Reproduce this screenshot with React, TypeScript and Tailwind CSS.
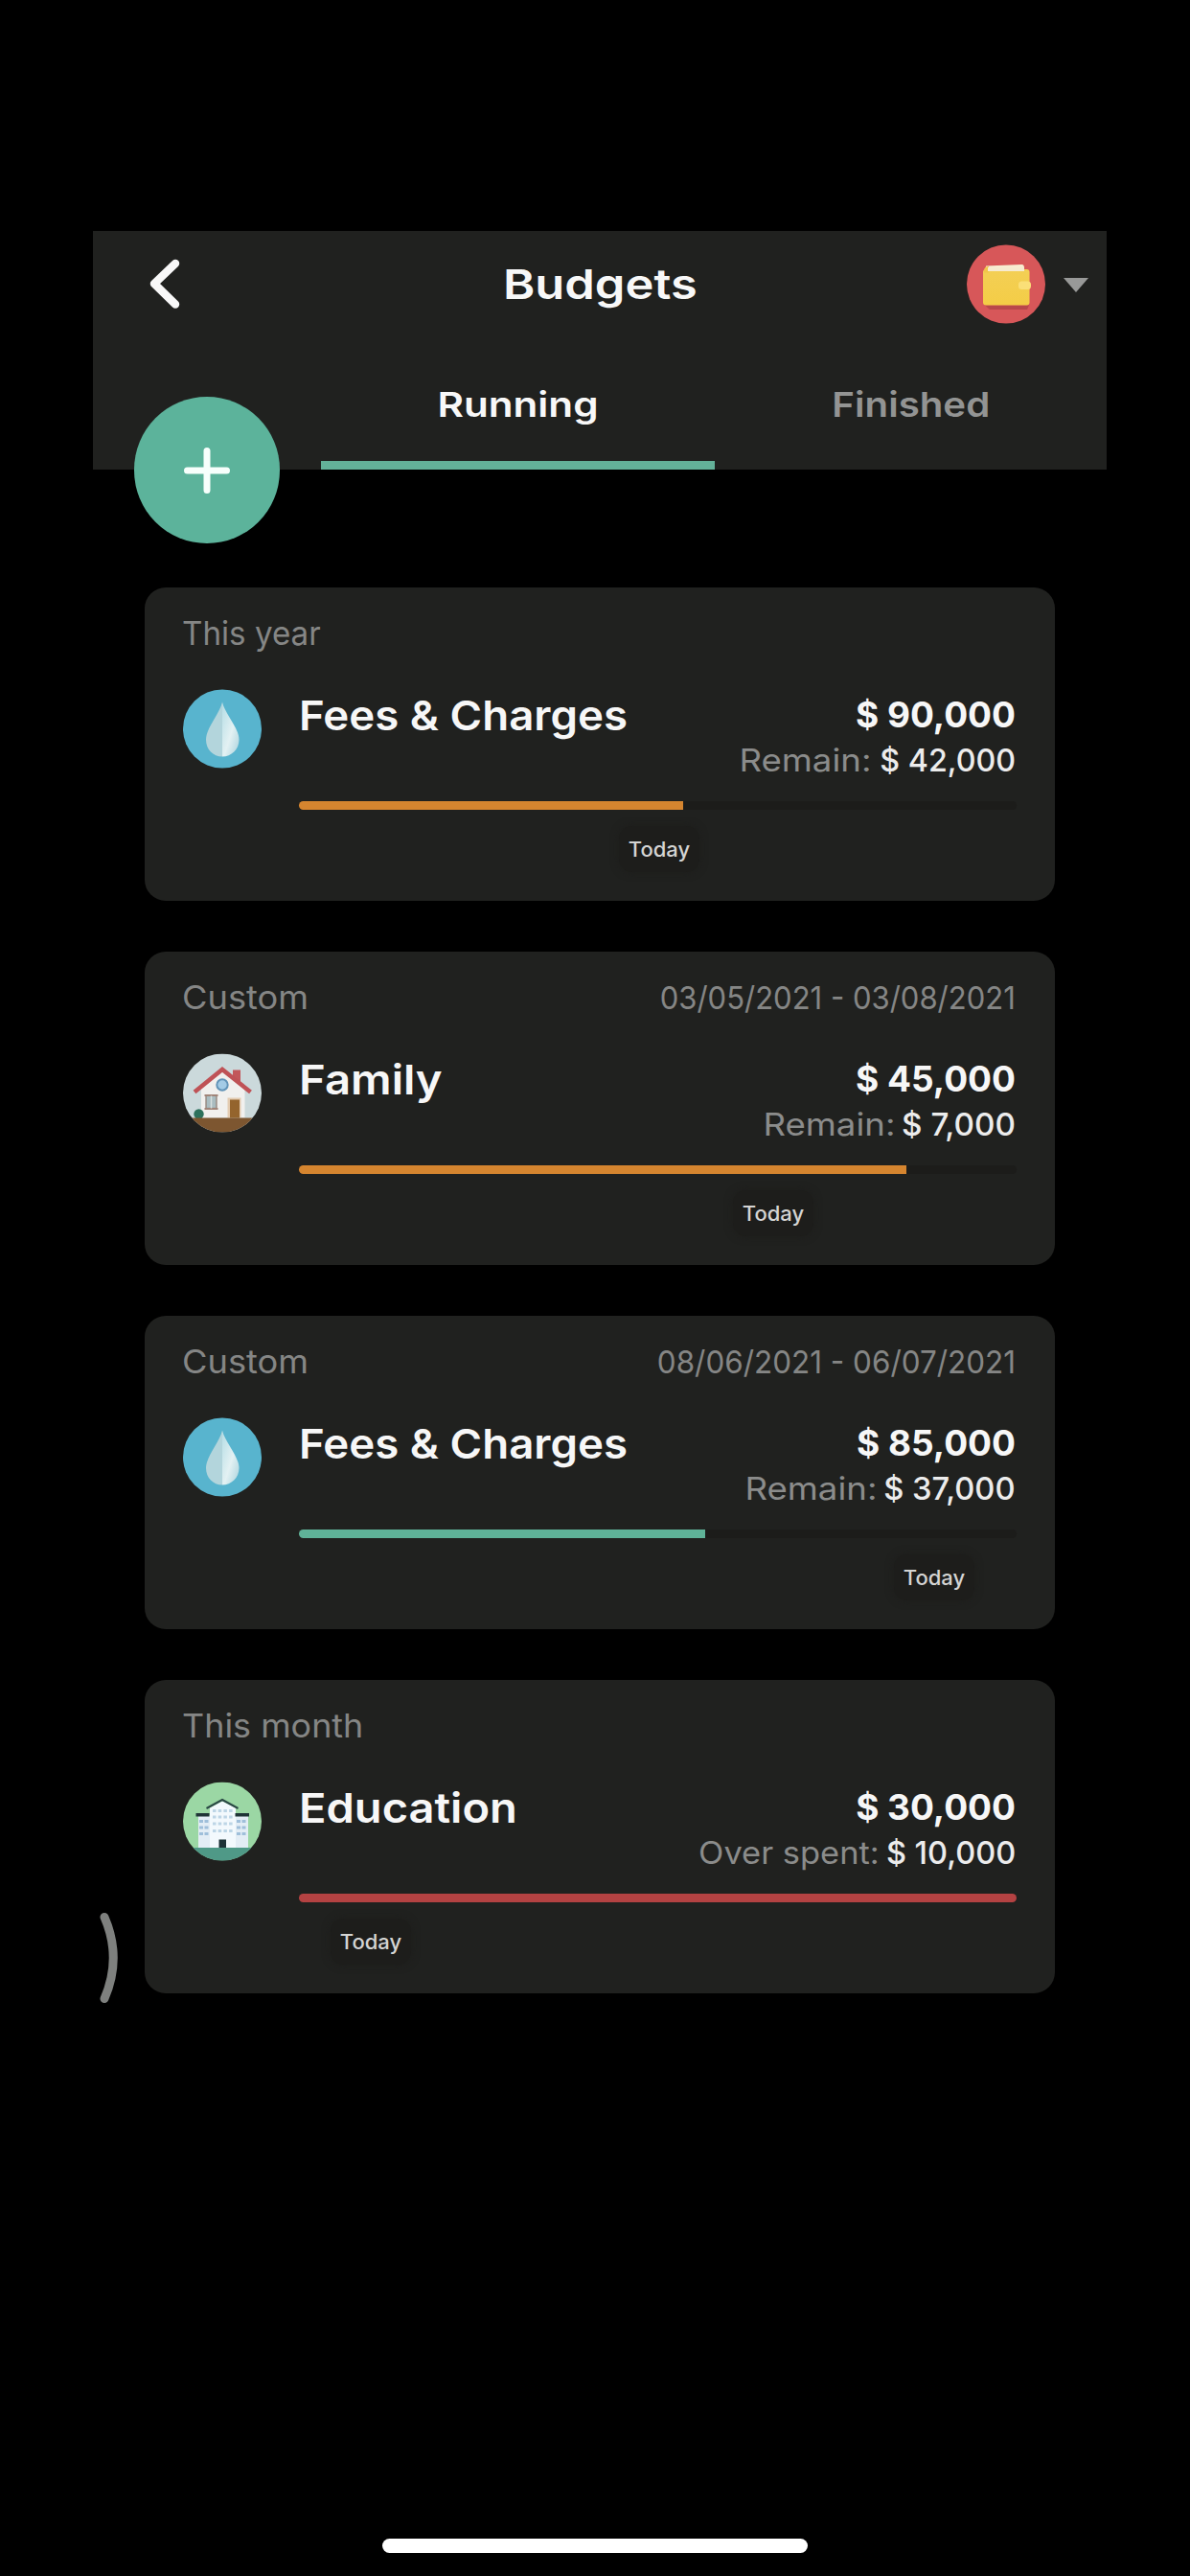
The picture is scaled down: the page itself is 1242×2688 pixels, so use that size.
import type { ReactNode } from "react";

type Budget = {
  period: string;
  periodClass: string;
  dates?: string;
  datesClass?: string;
  icon: ReactNode;
  name: string;
  nameClass: string;
  amount: string;
  label: string;
  labelClass: string;
  rest: string;
  restClass: string;
  fillClass: string;
  todayClass: string;
};

function DropIcon() {
  return (
    <svg viewBox="0 0 82 82" className="h-[83px] w-[82px] shrink-0">
      <defs>
        <linearGradient id="dropRight" x1="0" y1="0" x2="1" y2="1">
          <stop offset="0" stopColor="#b5dde5" />
          <stop offset="0.55" stopColor="#e3f1f3" />
          <stop offset="1" stopColor="#a9d2dc" />
        </linearGradient>
      </defs>
      <circle cx="41" cy="41" r="41" fill="#58b4ce" />
      <path d="M41 13C38 26 24 40 24 52.500C24 62.500 31.500 70 41 70Z" fill="#b3d5dc" />
      <path d="M41 13C44 26 58.500 40 58.500 52.500C58.500 62.500 50.500 70 41 70Z" fill="url(#dropRight)" />
    </svg>
  );
}

function HouseIcon() {
  return (
    <svg viewBox="0 0 82 82" className="h-[83px] w-[82px] shrink-0">
      <defs>
        <clipPath id="houseClip">
          <circle cx="41" cy="41" r="41" />
        </clipPath>
      </defs>
      <g clipPath="url(#houseClip)">
        <rect width="82" height="82" fill="#cbd9db" />
        <rect x="52" y="17" width="8" height="14" fill="#c2575a" />
        <path d="M19 36L41 17L64.500 36V67H19Z" fill="#f1f0ee" />
        <path d="M12 40L41 16.500L70.500 40" fill="none" stroke="#bf5256" strokeWidth="4.500" />
        <circle cx="41" cy="32.500" r="5.700" fill="#a3cbe6" stroke="#6193b8" strokeWidth="2" />
        <rect x="24" y="43.500" width="11" height="13.500" fill="#a9bcc0" stroke="#938279" strokeWidth="1.300" />
        <path d="M22.500 43.500H36.500M22.500 57.500H36.500" stroke="#a18478" strokeWidth="2" />
        <path d="M29.500 44V57" stroke="#d8dfde" strokeWidth="1.500" />
        <rect x="46.500" y="46" width="14" height="21" fill="#e4ccb2" />
        <rect x="49" y="48" width="10" height="19" fill="#94642d" />
        <circle cx="16.500" cy="63" r="5.200" fill="#2d715c" />
        <rect y="67" width="82" height="15" fill="#7d5630" />
      </g>
    </svg>
  );
}

function SchoolIcon() {
  return (
    <svg viewBox="0 0 82 82" className="h-[83px] w-[82px] shrink-0">
      <defs>
        <clipPath id="schoolClip">
          <circle cx="41" cy="41" r="41" />
        </clipPath>
      </defs>
      <g clipPath="url(#schoolClip)">
        <rect width="82" height="82" fill="#9bd7a4" />
        <rect x="16" y="35" width="52" height="34" fill="#e3edf5" />
        <path d="M28 27L41 20L55 27V69H28Z" fill="#f3f9fd" />
        <path d="M24.500 27.500L41 18.500L57.500 27.500" fill="none" stroke="#2b4945" strokeWidth="2" />
        <path d="M13.500 34.200H27.500M54.500 34.200H69" stroke="#1f3436" strokeWidth="3.400" />
        <path d="M31 30H52M31 36.500H52M31 43.500H52M31 51H52" stroke="#bdd5e6" strokeWidth="3" strokeDasharray="3.500 2.200" />
        <path d="M17 41H27M17 47.500H27M17 54H27M56 41H66.500M56 47.500H66.500M56 54H66.500" stroke="#9fbfda" strokeWidth="3.200" strokeDasharray="4 1.500" />
        <rect x="37.500" y="60" width="7.500" height="9" fill="#1d3237" />
        <rect y="68.500" width="82" height="14" fill="#4f9987" />
      </g>
    </svg>
  );
}

function WalletIcon() {
  return (
    <svg viewBox="0 0 82 82" className="h-[83px] w-[82px]">
      <defs>
        <linearGradient id="wallet" x1="0" y1="0" x2="0" y2="1">
          <stop offset="0" stopColor="#f3cf55" />
          <stop offset="1" stopColor="#f4cd46" />
        </linearGradient>
      </defs>
      <circle cx="41" cy="41" r="41" fill="#d75759" />
      <path d="M19 63H65L63 67.500H24Z" fill="#b9484a" />
      <path d="M20 22L57 20.500Q60 20 60 24V32H19Z" fill="#f8ecd0" />
      <rect x="17" y="25.500" width="48.500" height="37.500" rx="3" fill="url(#wallet)" />
      <path d="M18 27Q18 22.500 23 22.500L23 29H18Z" fill="#f1c54a" />
      <path d="M22 25.500H60" stroke="#f6ead0" strokeWidth="4" />
      <rect x="54" y="38" width="13" height="8.500" rx="3.500" fill="#fadf78" />
    </svg>
  );
}

const budgets: Budget[] = [
  {
    period: "This year",
    periodClass: "scale-x-[0.976]",
    icon: <DropIcon />,
    name: "Fees & Charges",
    nameClass: "scale-x-[1.061]",
    amount: "$ 90,000",
    label: "Remain:",
    labelClass: "mr-[5px] scale-x-[1.109]",
    rest: "$ 42,000",
    restClass: "scale-x-[0.977]",
    fillClass: "w-[401px] rounded-l-full bg-[#d5852f]",
    todayClass: "ml-[334px]",
  },
  {
    period: "Custom",
    periodClass: "scale-x-[1.066]",
    dates: "03/05/2021 - 03/08/2021",
    datesClass: "scale-x-[0.940]",
    icon: <HouseIcon />,
    name: "Family",
    nameClass: "scale-x-[1.100]",
    amount: "$ 45,000",
    label: "Remain:",
    labelClass: "mr-[8px] scale-x-[1.109]",
    rest: "$ 7,000",
    restClass: "scale-x-[1.008]",
    fillClass: "w-[634px] rounded-l-full bg-[#d5852f]",
    todayClass: "ml-[453px]",
  },
  {
    period: "Custom",
    periodClass: "scale-x-[1.066]",
    dates: "08/06/2021 - 06/07/2021",
    datesClass: "scale-x-[0.952]",
    icon: <DropIcon />,
    name: "Fees & Charges",
    nameClass: "scale-x-[1.061]",
    amount: "$ 85,000",
    label: "Remain:",
    labelClass: "mr-[6px] scale-x-[1.109]",
    rest: "$ 37,000",
    restClass: "scale-x-[0.991]",
    fillClass: "w-[424px] rounded-l-full bg-[#5fb398]",
    todayClass: "ml-[621px]",
  },
  {
    period: "This month",
    periodClass: "scale-x-[1.056]",
    icon: <SchoolIcon />,
    name: "Education",
    nameClass: "scale-x-[1.094]",
    amount: "$ 30,000",
    label: "Over spent:",
    labelClass: "mr-[5px] scale-x-[1.044]",
    rest: "$ 10,000",
    restClass: "scale-x-[0.986]",
    fillClass: "w-full rounded-full bg-[#b44242]",
    todayClass: "ml-[33px]",
  },
];

function BudgetCard({ b }: { b: Budget }) {
  return (
    <section className="h-[327px] rounded-[22px] bg-[#20211f] pt-7 pr-[41px] pl-10">
      <div className="flex h-10 items-center justify-between text-[34px] leading-10 text-[#858685]">
        <span className={`-ml-px origin-left ${b.periodClass}`}>{b.period}</span>
        {b.dates && <span className={`origin-right text-[33px] ${b.datesClass}`}>{b.dates}</span>}
      </div>
      <div className="mt-[38px] flex gap-[39px]">
        {b.icon}
        <div className="min-w-0 flex-1">
          <div className="flex justify-between">
            <h2 className={`origin-left text-[43px] leading-[54px] font-semibold text-[#f7f7f7] ${b.nameClass}`}>{b.name}</h2>
            <div className="text-right whitespace-nowrap">
              <div className="text-[37px] leading-[54px] font-bold text-[#f7f7f7]">{b.amount}</div>
              <div className="flex justify-end text-[33px] leading-10">
                <span className={`origin-right text-[#8b8c8b] ${b.labelClass}`}>{b.label}</span>
                <span className={`origin-right font-medium text-[#ececec] ${b.restClass}`}>{b.rest}</span>
              </div>
            </div>
          </div>
          <div className="mt-[23px] -mr-px h-[9px] rounded-full bg-[#1c1c1a]">
            <div className={`h-full ${b.fillClass}`} />
          </div>
          <div className={`mt-[17px] flex h-12 w-[84px] items-center justify-center rounded-[14px] bg-[#1d1d1b] text-[22px] leading-[48px] font-medium text-[#d4d4d3] shadow-[0_0_8px_#1d1d1b] ${b.todayClass}`}>
            Today
          </div>
        </div>
      </div>
    </section>
  );
}

export default function App() {
  return (
    <main className="relative flex h-[2688px] w-[1242px] flex-col overflow-hidden bg-black pt-[241px] font-['Inter',sans-serif]">
      <header className="relative ml-[97px] h-[249px] w-[1058px] bg-[#20211f]">
        <div className="grid h-[110px] grid-cols-3 items-center">
          <svg viewBox="0 0 32 54" className="ml-[59px] h-[54px] w-8">
            <path d="M27 6L5 27L27 48.500" fill="none" stroke="#f8f8f8" strokeWidth="8.500" strokeLinecap="round" strokeLinejoin="round" />
          </svg>
          <h1 className="scale-x-[1.177] text-center text-[43px] leading-[54px] font-semibold text-[#f8f8f8]">Budgets</h1>
          <div className="flex items-center justify-end gap-[19px] pr-[19px]">
            <WalletIcon />
            <svg viewBox="0 0 26 15" className="mt-0.5 h-[15px] w-[26px]">
              <path d="M0 0H26L13 15Z" fill="#989998" />
            </svg>
          </div>
        </div>
        <nav className="grid h-[139px] grid-cols-[411px_409px] pl-[238px] text-center text-[36px] leading-[50px] font-semibold">
          <div className="flex flex-col justify-between pt-[46px]">
            <span className="scale-x-[1.171] text-[#f8f8f8]">Running</span>
            <div className="h-[9px] bg-[#63b199]" />
          </div>
          <div className="pt-[46px]">
            <span className="inline-block scale-x-[1.117] text-[#939493]">Finished</span>
          </div>
        </nav>
        <button className="absolute top-[173px] left-[43px] flex h-[153px] w-[152px] items-center justify-center rounded-full bg-[#5cb39b]">
          <svg viewBox="0 0 48 48" className="size-12">
            <path d="M24 3.500V44.500M3.500 24H44.500" stroke="#f7fffc" strokeWidth="7" strokeLinecap="round" />
          </svg>
        </button>
      </header>

      <div className="mt-[123px] ml-[151px] flex w-[950px] flex-col gap-[53px]">
        {budgets.map((b, i) => (
          <BudgetCard key={i} b={b} />
        ))}
      </div>

      <svg viewBox="0 0 22 96" className="absolute top-[1995px] left-[103px] h-24 w-[22px]">
        <path d="M6 5.500Q24.500 48 6 90.500" fill="none" stroke="#7e807e" strokeWidth="9" strokeLinecap="round" />
      </svg>
      <div className="mt-auto mb-6 h-[15px] w-[444px] self-center rounded-full bg-white" />
    </main>
  );
}
